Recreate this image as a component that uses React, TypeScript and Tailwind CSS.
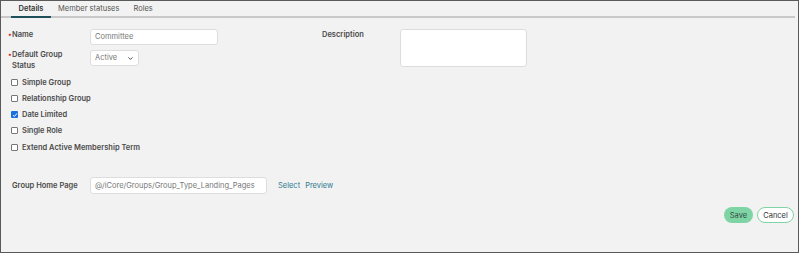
import { ChevronDown } from "lucide-react";

const font = { fontFamily: 'Inter, "Open Sans", sans-serif' };

function Box({ checked }: { checked?: boolean }) {
    if (checked) {
        return (
            <span className="flex h-[7px] w-[7px] items-center justify-center rounded-[1px] bg-[#1a6fe0]">
                <svg viewBox="0 0 8 8" className="h-[6px] w-[6px]">
                    <path d="M1.3 4.2 L3.2 6 L6.8 1.8" fill="none" stroke="#fff" strokeWidth="1.3" />
                </svg>
            </span>
        );
    }
    return <span className="h-[7px] w-[7px] rounded-[1px] border border-[#777] bg-white" />;
}

const checks = [
    { label: "Simple Group" },
    { label: "Relationship Group" },
    { label: "Date Limited", checked: true },
    { label: "Single Role" },
    { label: "Extend Active Membership Term" },
];

export default function App() {
    return (
        <div className="h-[253px] w-[799px] border border-[#5a5a5a] bg-[#f2f2f2] text-[7.5px] text-[#4a4a4a]" style={font}>
            {/* tabs */}
            <div className="mr-[3px] flex h-[17px] border-b-2 border-[#c8c8c8] pl-[10px]">
                <div className="-mb-[2px] flex w-[40px] items-center justify-center border-b-2 border-[#1d4f5c] pt-[1px] font-semibold text-[#333]">
                    Details
                </div>
                <div className="flex items-center pl-[7px] pr-[14px] pt-[1px] text-[#555]">Member statuses</div>
                <div className="flex items-center pt-[1px] text-[#555]">Roles</div>
            </div>

            <div className="flex pt-[11px]">
                {/* left column */}
                <div className="w-[316px] shrink-0 pl-[7px]">
                    <div className="flex h-[17px]">
                        <div className="flex w-[82px] shrink-0 font-semibold">
                            <span className="w-[4px] text-[#d9342b]">•</span>Name
                        </div>
                        <div className="flex h-[16px] w-[128px] items-center rounded-[3px] border border-[#ddd] bg-white px-[4px] text-[#777]">
                            Committee
                        </div>
                    </div>
                    <div className="mt-[4px] flex h-[24px]">
                        <div className="-mt-[1px] w-[82px] shrink-0 font-semibold leading-[11px]">
                            <div className="flex"><span className="w-[4px] text-[#d9342b]">•</span>Default Group</div>
                            <div className="pl-[4px]">Status</div>
                        </div>
                        <div className="flex h-[16px] w-[49px] items-center justify-between rounded-[3px] border border-[#ddd] bg-white px-[4px] text-[#777]">
                            Active
                            <ChevronDown className="h-[7px] w-[7px] text-[#333]" strokeWidth={3} />
                        </div>
                    </div>
                    <div className="flex flex-col pl-[3px] font-semibold">
                        {checks.map((c) => (
                            <div key={c.label} className="flex h-[16.25px] items-center gap-[4px]">
                                <Box checked={c.checked} />
                                {c.label}
                            </div>
                        ))}
                    </div>
                    <div className="mt-[22px] flex items-center whitespace-nowrap">
                        <div className="w-[82px] shrink-0 pl-[4px] font-semibold">Group Home Page</div>
                        <div className="flex h-[17px] w-[177px] shrink-0 items-center rounded-[3px] border border-[#ddd] bg-white px-[4px] text-[#777]">
                            @/iCore/Groups/Group_Type_Landing_Pages
                        </div>
                        <span className="ml-[11px] text-[#2b7a90]">Select</span>
                        <span className="ml-[5px] text-[#2b7a90]">Preview</span>
                    </div>
                </div>

                {/* right column */}
                <div className="flex pl-[5px]">
                    <div className="w-[78px] font-semibold">Description</div>
                    <div className="h-[38px] w-[127px] rounded-[3px] border border-[#ddd] bg-white" />
                </div>
            </div>

            <div className="mt-[13px] flex justify-end gap-[4px] pr-[4px]">
                <button className="h-[16px] w-[29px] rounded-full bg-[#7fd4a6] text-[#2f4f3f]">Save</button>
                <button className="h-[16px] w-[37px] rounded-full border border-[#7fd4a6] bg-white text-[#333]">Cancel</button>
            </div>
        </div>
    );
}
